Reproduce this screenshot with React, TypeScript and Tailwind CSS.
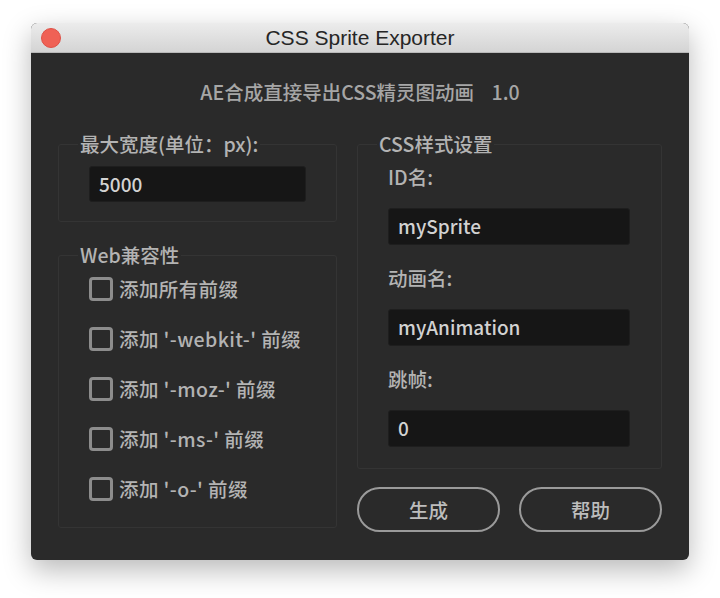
const cjk = { fontFamily: '"Noto Sans CJK SC", "Noto Sans", sans-serif' }

function Group({ title, className, children }: { title: string; className?: string; children: React.ReactNode }) {
  return (
    <fieldset className={`border border-[#343434] rounded-[3px] ${className ?? ''}`}>
      <legend className="ml-[19px] px-[2px] text-[19.5px] leading-[24px] text-[#b3b3b3] font-medium">{title}</legend>
      {children}
    </fieldset>
  )
}

function Field({ value }: { value: string }) {
  return (
    <div className="h-[37px] bg-[#161616] border border-[#1e1e1e] rounded-[3px] flex items-center px-[9px] text-[19px] text-[#d2d2d2] font-medium">
      {value}
    </div>
  )
}

function Check({ label }: { label: string }) {
  return (
    <div className="flex items-center gap-[6px] h-[24px]">
      <div className="w-[24px] h-[24px] border-[3px] border-[#8c8c8c] rounded-[4px]" />
      <span className="text-[19.5px] text-[#b3b3b3] leading-[24px] font-medium tracking-[0.4px]">{label}</span>
    </div>
  )
}

export default function App() {
  return (
    <div className="w-[720px] h-[598px] bg-white pt-[23px] pl-[31px]" style={cjk}>
      <div className="w-[658px] h-[537px] rounded-[6px] overflow-hidden shadow-[0_10px_28px_rgba(0,0,0,0.28)] flex flex-col bg-[#2a2a2a]">
        <div className="h-[30px] bg-gradient-to-b from-[#ececec] to-[#d4d4d4] border-b border-[#b9b9b9] flex items-center relative">
          <div className="absolute left-[10px] top-[5px] w-[20px] h-[20px] rounded-full bg-[#ef6155] border border-[#de5147]" />
          <div
            className="flex-1 text-center text-[21px] text-[#262626] leading-[30px]"
            style={{ fontFamily: '"Liberation Sans", Arial, sans-serif' }}
          >
            CSS Sprite Exporter
          </div>
        </div>

        <div className="flex-1 px-[27px] pt-[27px]">
          <div className="text-center text-[19.5px] leading-[24px] text-[#a6a6a6] font-medium">
            AE合成直接导出CSS精灵图动画&nbsp;&nbsp;&nbsp;&nbsp;1.0
          </div>

          <div className="flex gap-[20px] mt-[28px]">
            <div className="w-[279px] flex flex-col gap-[21px]">
              <Group title="最大宽度(单位：px):">
                <div className="pl-[30px] pr-[30px] pt-[10px] pb-[19px]">
                  <div className="h-[36px] bg-[#161616] border border-[#1e1e1e] rounded-[3px] flex items-center px-[9px] text-[19px] text-[#d2d2d2] font-medium">
                    5000
                  </div>
                </div>
              </Group>
              <Group title="Web兼容性">
                <div className="pl-[30px] pt-[10px] pb-[26px] flex flex-col gap-[26px]">
                  <Check label="添加所有前缀" />
                  <Check label="添加 '-webkit-' 前缀" />
                  <Check label="添加 '-moz-' 前缀" />
                  <Check label="添加 '-ms-' 前缀" />
                  <Check label="添加 '-o-' 前缀" />
                </div>
              </Group>
            </div>

            <div className="w-[305px] flex flex-col">
              <Group title="CSS样式设置">
                <div className="pl-[30px] pr-[31px] pt-[9px] pb-[21px] flex flex-col">
                  <div className="text-[19.5px] leading-[24px] text-[#b3b3b3] font-medium">ID名:</div>
                  <div className="mt-[19px]"><Field value="mySprite" /></div>
                  <div className="mt-[21px] text-[19.5px] leading-[24px] text-[#b3b3b3] font-medium">动画名:</div>
                  <div className="mt-[19px]"><Field value="myAnimation" /></div>
                  <div className="mt-[21px] text-[19.5px] leading-[24px] text-[#b3b3b3] font-medium">跳帧:</div>
                  <div className="mt-[19px]"><Field value="0" /></div>
                </div>
              </Group>
              <div className="flex justify-between mt-[18px]">
                <button className="w-[143px] h-[45px] rounded-full border-2 border-[#9a9a9a] text-[19.5px] text-[#bdbdbd] font-medium">生成</button>
                <button className="w-[143px] h-[45px] rounded-full border-2 border-[#9a9a9a] text-[19.5px] text-[#bdbdbd] font-medium">帮助</button>
              </div>
            </div>
          </div>
        </div>
      </div>
    </div>
  )
}
